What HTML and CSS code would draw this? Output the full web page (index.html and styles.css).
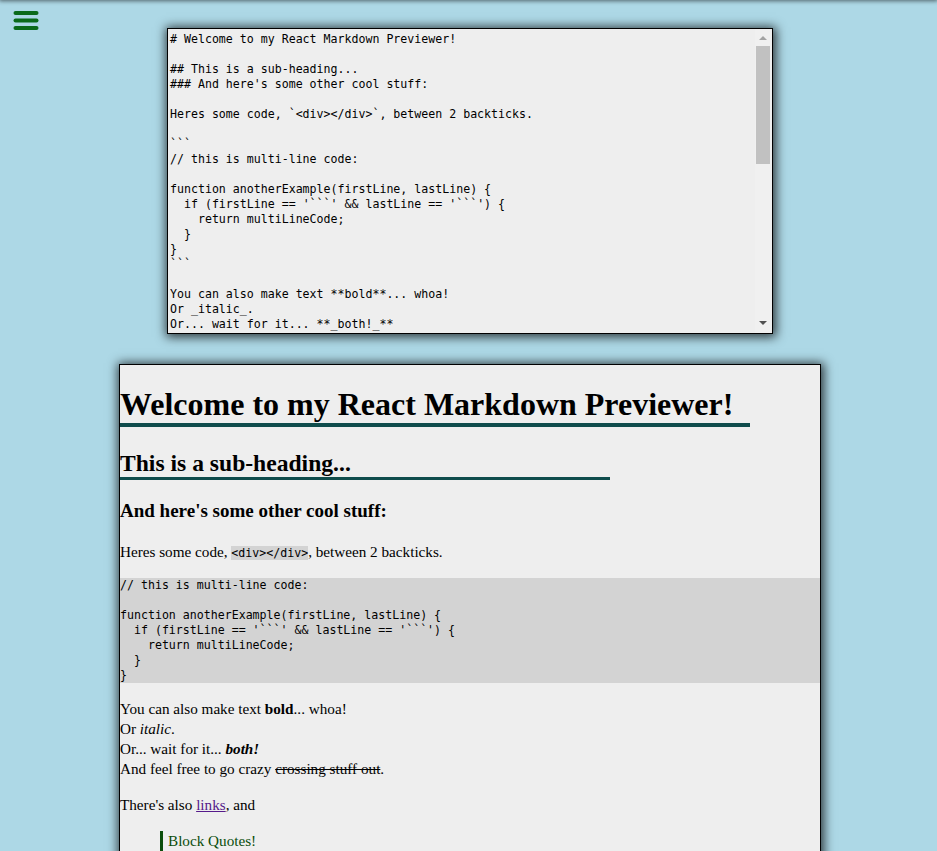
FILE: index.html
```html
<!DOCTYPE html>
<html>
<head>
<meta charset="utf-8">
<link rel="stylesheet" href="styles.css">
</head>
<body>
<div class="topshadow"></div>
<button class="menu" aria-label="menu">
<svg width="26" height="22" viewBox="0 0 26 22"><g stroke="#0a6a1a" stroke-width="4" stroke-linecap="round"><line x1="2.5" y1="3" x2="23.5" y2="3"/><line x1="2.5" y1="10.5" x2="23.5" y2="10.5"/><line x1="2.5" y1="18" x2="23.5" y2="18"/></g></svg>
</button>
<main class="page">
<div class="editor-wrap">
<textarea class="editor" spellcheck="false"># Welcome to my React Markdown Previewer!

## This is a sub-heading...
### And here's some other cool stuff:

Heres some code, &#96;&lt;div&gt;&lt;/div&gt;&#96;, between 2 backticks.

&#96;&#96;&#96;
// this is multi-line code:

function anotherExample(firstLine, lastLine) {
  if (firstLine == '&#96;&#96;&#96;' &amp;&amp; lastLine == '&#96;&#96;&#96;') {
    return multiLineCode;
  }
}
&#96;&#96;&#96;

You can also make text **bold**... whoa!
Or _italic_.
Or... wait for it... **_both!_**
And feel free to go crazy ~~crossing stuff out~~.

There's also [links](https://www.freecodecamp.org), and
&gt; Block Quotes!

And if you want to get really crazy, even tables:</textarea>
<div class="scrollbar" aria-hidden="true">
<span class="arrow up"></span>
<span class="thumb"></span>
<span class="arrow down"></span>
</div>
</div>
<section class="preview">
<h1>Welcome to my React Markdown Previewer!</h1>
<h2>This is a sub-heading...</h2>
<h3>And here's some other cool stuff:</h3>
<p>Heres some code, <code>&lt;div&gt;&lt;/div&gt;</code>, between 2 backticks.</p>
<pre><code>// this is multi-line code:

function anotherExample(firstLine, lastLine) {
  if (firstLine == '&#96;&#96;&#96;' &amp;&amp; lastLine == '&#96;&#96;&#96;') {
    return multiLineCode;
  }
}</code></pre>
<p>You can also make text <strong>bold</strong>... whoa!<br>Or <em>italic</em>.<br>Or... wait for it... <strong><em>both!</em></strong><br>And feel free to go crazy <del>crossing stuff out</del>.</p>
<p>There's also <a href="#">links</a>, and</p>
<blockquote><p>Block Quotes!</p></blockquote>
</section>
</main>
</body>
</html>
```
FILE: styles.css
```css
html, body {
  margin: 0;
  padding: 0;
  background: #add8e6;
  overflow: hidden;
}
body {
  font-family: "Liberation Serif", "Times New Roman", serif;
  height: 851px;
}
.topshadow {
  position: fixed;
  top: -10px;
  left: 0;
  right: 0;
  height: 10px;
  box-shadow: 0 0 4px 1px rgba(0,0,0,0.55);
}
.menu {
  position: absolute;
  top: 10px;
  left: 13px;
  background: none;
  border: none;
  padding: 0;
  margin: 0;
  width: 26px;
  height: 22px;
}
.menu svg { display: block; }
.page {
  display: flex;
  flex-direction: column;
  align-items: flex-start;
  padding-top: 28px;
}
.editor-wrap {
  position: relative;
  margin-left: 167px;
  width: 606px;
  height: 306px;
  box-shadow: 1px 1px 10px 2px rgba(0,0,0,0.75);
}
.editor {
  display: block;
  box-sizing: border-box;
  width: 606px;
  height: 306px;
  margin: 0;
  border: 1px solid #000;
  background: #eee;
  font-family: "DejaVu Sans Mono", monospace;
  font-size: 11.6px;
  line-height: 15px;
  padding: 3px 20px 3px 2px;
  resize: none;
  outline: none;
  color: #000;
  overflow: hidden;
}
.scrollbar {
  position: absolute;
  top: 1px;
  right: 1px;
  bottom: 1px;
  width: 17px;
  background: #f0f0f0;
}
.scrollbar .thumb {
  position: absolute;
  left: 1px;
  right: 2px;
  top: 17px;
  height: 118px;
  background: #c1c1c1;
}
.scrollbar .arrow {
  position: absolute;
  left: 4px;
  width: 0;
  height: 0;
  border-left: 4px solid transparent;
  border-right: 4px solid transparent;
}
.scrollbar .up {
  top: 7px;
  border-bottom: 4px solid #a3a3a3;
}
.scrollbar .down {
  bottom: 8px;
  border-top: 4px solid #505050;
}
.preview {
  box-sizing: border-box;
  margin-left: 119px;
  margin-top: 30px;
  width: 702px;
  height: 700px;
  border: 1px solid #000;
  background: #eee;
  box-shadow: 1px 1px 10px 2px rgba(0,0,0,0.75);
}
.preview h1 {
  width: 90%;
  font-size: 32px;
  margin: 21px 0 0;
  line-height: 37px;
  border-bottom: 4px solid #0f4c4c;
}
.preview h2 {
  width: 70%;
  font-size: 23.6px;
  margin: 22px 0 0;
  line-height: 28px;
  border-bottom: 3px solid #0f4c4c;
}
.preview h3 {
  font-size: 19px;
  line-height: 22px;
  margin: 20px 0 0;
}
.preview p {
  font-size: 15.2px;
  line-height: 20px;
  margin: 16px 0 0;
}
.preview h3 + p { margin-top: 20px; }
.preview code {
  font-family: "DejaVu Sans Mono", monospace;
  font-size: 11.6px;
  background: #d3d3d3;
}
.preview pre {
  margin: 15px 0 0;
  background: #d3d3d3;
  padding: 0;
  font-family: "DejaVu Sans Mono", monospace;
  font-size: 11.6px;
  line-height: 15px;
}
.preview pre code { background: none; }
.preview a { color: #551a8b; }
.preview blockquote {
  margin: 16px 0 0 40px;
  border-left: 3px solid #0b4d0b;
  color: #0b4d0b;
  padding-left: 5px;
}
.preview blockquote p { margin: 0; }
```
